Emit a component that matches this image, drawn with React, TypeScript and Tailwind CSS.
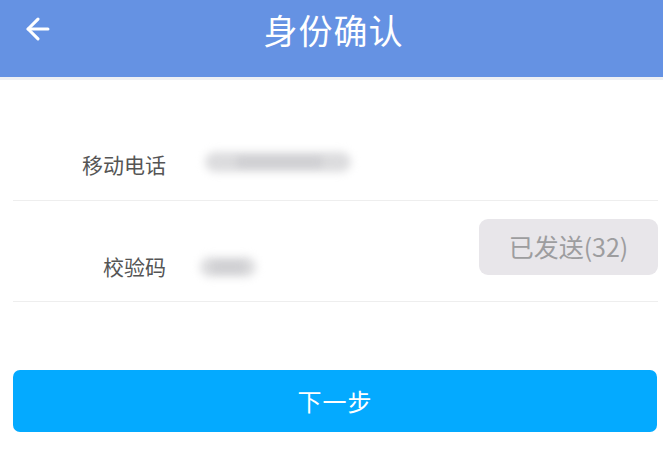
import { ArrowLeft } from 'lucide-react';

const cjk = "font-['Noto_Sans_CJK_SC','Noto_Sans',sans-serif]";

function Blur({ width }: { width: number }) {
  return (
    <div className="relative h-[26px]" style={{ width }}>
      <div className="absolute inset-x-[2px] inset-y-[3px] rounded-[10px] bg-[#dcdcde] blur-[4px]" />
      <div className="absolute left-[22%] right-[20%] top-[8px] h-[10px] rounded-full bg-[#d0d0d3] blur-[3px]" />
    </div>
  );
}

export default function App() {
  return (
    <div className={`w-[663px] h-[449px] bg-white overflow-hidden ${cjk}`}>
      <header className="grid grid-cols-[1fr_auto_1fr] items-center h-[77px] bg-[#6592e3] text-white">
        <div className="pl-[21px] pb-[20px]">
          <ArrowLeft className="h-[34px] w-[34px]" strokeWidth={2.2} />
        </div>
        <h1 className="text-[34px] leading-none pb-[18px] pl-[4px] tracking-[1px]">身份确认</h1>
        <div />
      </header>
      <div className="h-[3px] bg-[#eef0f4]" />

      <div className="ml-[13px] mr-[5px]">
        <div className="flex items-end h-[121px] pb-[22px] border-b border-[#eeeeee]">
          <span className="w-[153px] text-right text-[21px] leading-[28px] text-[#555]">移动电话</span>
          <div className="ml-[37px] mb-[3px]">
            <Blur width={150} />
          </div>
        </div>

        <div className="flex h-[101px] border-b border-[#eeeeee]">
          <span className="self-end pb-[21px] w-[153px] text-right text-[21px] leading-[28px] text-[#555]">
            校验码
          </span>
          <div className="self-end mb-[21px] ml-[32px]">
            <Blur width={60} />
          </div>
          <button className="ml-auto mt-[18px] h-[56px] w-[179px] rounded-[9px] bg-[#e8e6ea] text-[25px] text-[#9d9d9f]">
            已发送(32)
          </button>
        </div>
      </div>

      <div className="mx-[13px] mr-[6px] mt-[68px]">
        <button className="w-full h-[62px] rounded-[7px] bg-[#04aaff] text-white text-[24px] tracking-[1px]">
          下一步
        </button>
      </div>
    </div>
  );
}
